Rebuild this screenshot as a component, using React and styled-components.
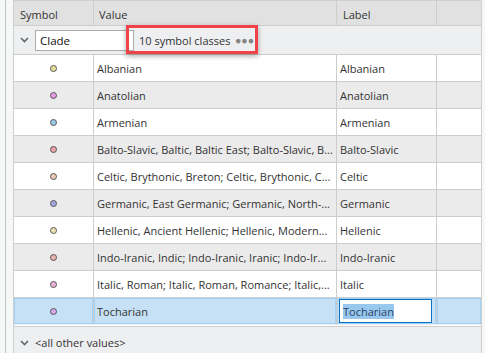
import React from "react";
import styled, { createGlobalStyle, css } from "styled-components";

const Global = createGlobalStyle`
  html, body { margin: 0; padding: 0; background: #f6f7f7; }
  body { font-family: "Open Sans", "Noto Sans", sans-serif; font-size: 11px; color: #333; }
  #root { height: 100vh; }
`;

const COLS = "80px 243px 100px 44px";

const Page = styled.div`
  display: flex;
  height: 100vh;
  overflow: hidden;
  background: #f6f7f7;
`;

const Rail = styled.div`
  width: 5px;
  border-right: 1px solid #c4c4c4;
  flex: none;
`;

const Gutter = styled.div`
  width: 7px;
  flex: none;
`;

const Table = styled.div`
  width: 469px;
  box-sizing: border-box;
  border: 1px solid #cfcfcf;
  border-bottom: none;
  background: #fff;
  display: flex;
  flex-direction: column;
  flex: none;
`;

const Row = styled.div`
  display: grid;
  grid-template-columns: ${COLS};
`;

const HeadCell = styled.div`
  box-sizing: border-box;
  height: 25px;
  padding: 3px 0 0 ${(p) => p.$pad || 6}px;
  display: flex;
  align-items: center;
  background: #e1e1e1;
  border-right: ${(p) => (p.$last ? "none" : "1px solid #cdcdcd")};
  border-bottom: 1px solid #cdcdcd;
  color: #333;
`;

const GroupRow = styled.div`
  position: relative;
  box-sizing: border-box;
  height: 29px;
  background: #eeeff1;
  border-bottom: 1px solid #cdcdcd;
  display: flex;
  align-items: center;
  padding-left: 6px;
`;

const Chevron = styled.svg`
  width: 9px;
  height: 6px;
  flex: none;
  margin-right: ${(p) => p.$gap}px;
`;

const ClassInput = styled.div`
  box-sizing: border-box;
  width: 99px;
  height: 21px;
  border: 1px solid #ababab;
  background: #fff;
  display: flex;
  align-items: center;
  padding-left: 4px;
  color: #111;
  font-size: 11.5px;
`;

const Summary = styled.div`
  display: flex;
  align-items: center;
  padding-left: 5px;
  width: 120px;
  box-sizing: border-box;
  color: #333;
`;

const Dots = styled.span`
  margin-left: auto;
  color: #858585;
  font-size: 10.5px;
`;

const Highlight = styled.div`
  position: absolute;
  left: 112px;
  top: -1px;
  width: 132px;
  height: 29px;
  box-sizing: border-box;
  border: 3px solid #ef4349;
  box-shadow: 0 2px 5px rgba(0, 0, 0, 0.35);
  pointer-events: none;
`;

const Cell = styled.div`
  box-sizing: border-box;
  height: 27px;
  display: flex;
  align-items: center;
  justify-content: ${(p) => (p.$center ? "center" : "flex-start")};
  padding: 0 ${(p) => (p.$center ? 0 : 4)}px 0 ${(p) => (p.$center ? 0 : 3)}px;
  background: ${(p) => (p.$alt ? "#ebebeb" : "#fff")};
  border-right: ${(p) => (p.$last ? "none" : "1px solid #cdcdcd")};
  border-bottom: 1px solid #cdcdcd;
  white-space: nowrap;
  overflow: hidden;
  color: #333;
  ${(p) =>
    p.$selected &&
    css`
      background: #c6e1f5;
      box-shadow: inset 0 0 0 1px #a3d1f4;
      border-bottom-color: #e9eef2;
    `}
`;

const Swatch = styled.span`
  width: 5px;
  height: 5px;
  border-radius: 50%;
  border: 1px solid #555;
  background: ${(p) => p.$color};
`;

const EditBox = styled.div`
  box-sizing: border-box;
  width: 96px;
  height: 24px;
  margin-left: -1px;
  border: 1px solid #0a6fc2;
  background: #fff;
  display: flex;
  align-items: center;
  padding-left: 3px;
`;

const Selected = styled.span`
  background: #99c8ef;
  color: #2b3f66;
  line-height: 15px;
`;

const Footer = styled.div`
  flex: 1;
  margin-top: 1px;
  border-top: 1px solid #cdcdcd;
  background: #eeeff1;
  display: flex;
  align-items: flex-start;
  padding: 8px 0 0 6px;
  color: #333;
`;

const FooterLabel = styled.span`
  line-height: 15px;
`;

const FooterChevron = styled.div`
  display: flex;
  align-items: center;
  height: 15px;
`;

const ChevronIcon = ({ gap }) => (
  <Chevron $gap={gap} viewBox="0 0 9 6">
    <path d="M1 1 L4.5 4.5 L8 1" fill="none" stroke="#666" strokeWidth="1.6" />
  </Chevron>
);

const rows = [
  ["#e6e29a", "Albanian", "Albanian"],
  ["#e79ae6", "Anatolian", "Anatolian"],
  ["#9cc8e8", "Armenian", "Armenian"],
  ["#e8a2aa", "Balto-Slavic, Baltic, Baltic East; Balto-Slavic, B...", "Balto-Slavic"],
  ["#ecc8b0", "Celtic, Brythonic, Breton; Celtic, Brythonic, C...", "Celtic"],
  ["#a3a9e0", "Germanic, East Germanic; Germanic, North-...", "Germanic"],
  ["#eee2b2", "Hellenic, Ancient Hellenic; Hellenic, Modern...", "Hellenic"],
  ["#eab2aa", "Indo-Iranic, Indic; Indo-Iranic, Iranic; Indo-Ir...", "Indo-Iranic"],
  ["#ecb2dc", "Italic, Roman; Italic, Roman, Romance; Italic,...", "Italic"],
  ["#d9a8ea", "Tocharian", "Tocharian"],
];

export default function App() {
  return (
    <>
      <Global />
      <Page>
        <Rail />
        <Gutter />
        <Table>
          <Row>
            <HeadCell>Symbol</HeadCell>
            <HeadCell $pad={5}>Value</HeadCell>
            <HeadCell $pad={6}>Label</HeadCell>
            <HeadCell $last />
          </Row>
          <GroupRow>
            <ChevronIcon gap={6} />
            <ClassInput>Clade</ClassInput>
            <Summary>
              10 symbol classes
              <Dots>●●●</Dots>
            </Summary>
            <Highlight />
          </GroupRow>
          {rows.map(([color, value, label], i) => {
            const alt = i % 2 === 1;
            const sel = i === rows.length - 1;
            return (
              <Row key={value}>
                <Cell $center $alt={alt} $selected={sel}>
                  <Swatch $color={color} />
                </Cell>
                <Cell $alt={alt} $selected={sel}>{value}</Cell>
                <Cell $alt={alt} $selected={sel}>
                  {sel ? (
                    <EditBox>
                      <Selected>{label}</Selected>
                    </EditBox>
                  ) : (
                    label
                  )}
                </Cell>
                <Cell $alt={alt} $selected={sel} $last />
              </Row>
            );
          })}
          <Footer>
            <FooterChevron>
              <ChevronIcon gap={6} />
            </FooterChevron>
            <FooterLabel>&lt;all other values&gt;</FooterLabel>
          </Footer>
        </Table>
      </Page>
    </>
  );
}
